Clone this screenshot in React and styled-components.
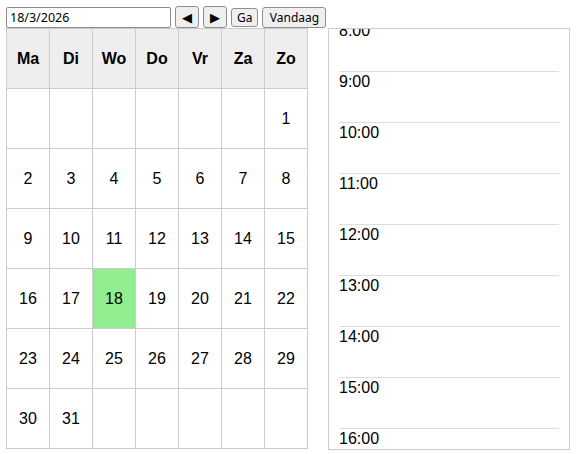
import { useLayoutEffect, useRef, useState } from 'react';
import styled, { createGlobalStyle } from 'styled-components';

const GlobalStyle = createGlobalStyle`
    html, body {
        margin: 0;
        padding: 0;
        background: #fff;
    }
    body {
        font-family: 'Liberation Sans', Arial, sans-serif;
        color: #000;
    }
`;

const Page = styled.div`
    padding: 6px;
    display: flex;
    flex-direction: column;
`;

const Toolbar = styled.div`
    display: flex;
    align-items: center;
    gap: 4px;
    height: 22px;
`;

const DateInput = styled.input`
    box-sizing: border-box;
    width: 165px;
    height: 21px;
    padding: 0 3px;
    border: 1px solid #8a8a8a;
    border-radius: 2px;
    font-family: 'Noto Sans', 'Open Sans', sans-serif;
    font-size: 12.5px;
    color: #000;
    outline: none;
`;

const NavButton = styled.button`
    box-sizing: border-box;
    height: ${(props) => props.$h}px;
    min-width: ${(props) => props.$w}px;
    padding: 0 5px;
    display: flex;
    align-items: center;
    justify-content: center;
    background-color: #efefef;
    border: 1px solid #8f8f8f;
    border-radius: 3px;
    font-family: ${(props) =>
        props.$arrow ? "'DejaVu Sans', sans-serif" : "'Noto Sans', 'Open Sans', sans-serif"};
    font-size: ${(props) => (props.$arrow ? '13px' : '12px')};
    color: #000;
    cursor: pointer;
`;

const Main = styled.div`
    display: flex;
    align-items: flex-start;
    gap: 20px;
`;

const Calendar = styled.table`
    border-collapse: collapse;
    table-layout: fixed;
    width: 302px;
    font-size: 16px;
`;

const Row = styled.tr`
    height: 60px;
`;

const DayHead = styled.th`
    border: 1px solid #ccc;
    background-color: #eee;
    font-weight: bold;
    text-align: center;
    vertical-align: middle;
    padding: 0;
`;

const DayCell = styled.td`
    border: 1px solid #ccc;
    background-color: ${(props) => (props.$today ? '#90ee90' : 'transparent')};
    text-align: center;
    vertical-align: middle;
    padding: 0;
`;

const Agenda = styled.div`
    box-sizing: border-box;
    width: 242px;
    height: 422px;
    border: 1px solid #ccc;
    overflow-y: auto;
    scrollbar-width: none;
    &::-webkit-scrollbar {
        display: none;
    }
`;

const HourSlot = styled.div`
    box-sizing: border-box;
    height: 51px;
    margin: 0 10px;
    padding-top: 1px;
    border-top: 1px solid #ddd;
    font-size: 16px;
    line-height: 18px;
`;

const dayNames = ['Ma', 'Di', 'Wo', 'Do', 'Vr', 'Za', 'Zo'];
const hours = Array.from({ length: 24 }, (_, i) => i);

function buildWeeks(year, month) {
    // month is 0-based, weeks start on Monday
    const first = new Date(year, month, 1);
    const offset = (first.getDay() + 6) % 7;
    const total = new Date(year, month + 1, 0).getDate();
    const cells = [];
    for (let i = 0; i < offset; i++) cells.push(null);
    for (let d = 1; d <= total; d++) cells.push(d);
    while (cells.length % 7 !== 0) cells.push(null);
    const weeks = [];
    for (let i = 0; i < cells.length; i += 7) weeks.push(cells.slice(i, i + 7));
    return weeks;
}

export default function App() {
    const [value, setValue] = useState('18/3/2026');
    const agendaRef = useRef(null);
    const weeks = buildWeeks(2026, 2);
    const today = 18;

    // scroll the day view so the working hours are in sight
    useLayoutEffect(() => {
        if (agendaRef.current) agendaRef.current.scrollTop = 417;
    }, []);

    return (
        <>
            <GlobalStyle />
            <Page>
                <Toolbar>
                    <DateInput value={value} onChange={(e) => setValue(e.target.value)} />
                    <NavButton $arrow $h={22} $w={24}>◀</NavButton>
                    <NavButton $arrow $h={22} $w={24}>▶</NavButton>
                    <NavButton $h={19} $w={27}>Ga</NavButton>
                    <NavButton $h={21} $w={64}>Vandaag</NavButton>
                </Toolbar>
                <Main>
                    <Calendar>
                        <thead>
                            <Row>
                                {dayNames.map((name) => (
                                    <DayHead key={name}>{name}</DayHead>
                                ))}
                            </Row>
                        </thead>
                        <tbody>
                            {weeks.map((week, w) => (
                                <Row key={w}>
                                    {week.map((day, i) => (
                                        <DayCell key={i} $today={day === today}>
                                            {day}
                                        </DayCell>
                                    ))}
                                </Row>
                            ))}
                        </tbody>
                    </Calendar>
                    <Agenda ref={agendaRef}>
                        {hours.map((h) => (
                            <HourSlot key={h}>{h}:00</HourSlot>
                        ))}
                    </Agenda>
                </Main>
            </Page>
        </>
    );
}
